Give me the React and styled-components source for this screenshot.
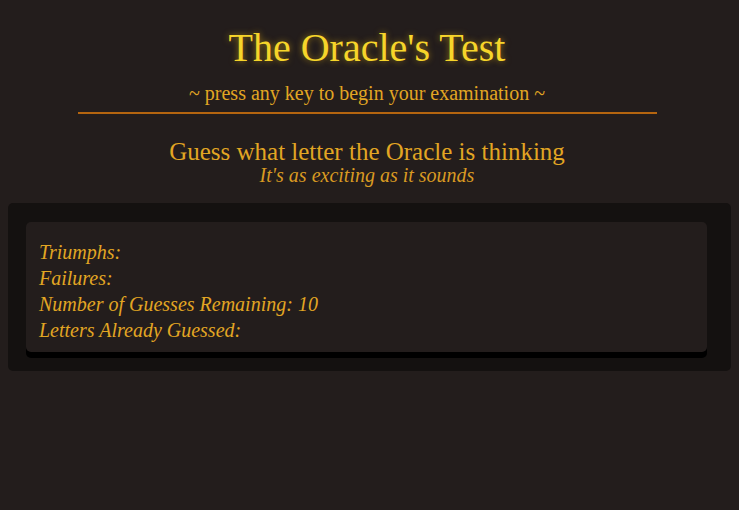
import React from 'react';
import styled, { createGlobalStyle } from 'styled-components';

// styles
const GlobalStyle = createGlobalStyle`
  body {
    margin: 8px;
    background: #231d1c;
    font-family: "Liberation Serif", "Times New Roman", serif;
  }
`;

const Page = styled.div`
  display: flex;
  flex-direction: column;
  align-items: center;
`;

const Header = styled.header`
  display: flex;
  flex-direction: column;
  align-items: center;
  width: 100%;
  padding-right: 5px;
  box-sizing: border-box;
`;

const Title = styled.h1`
  margin: 17px 0 0;
  font-size: 40px;
  font-weight: normal;
  line-height: 46px;
  color: #f6d52a;
  text-shadow: 0 0 6px rgba(230, 180, 20, 0.6);
`;

const Prompt = styled.div`
  margin-top: 11px;
  font-size: 20px;
  line-height: 22px;
  color: #e2a623;
`;

const Rule = styled.hr`
  width: 579px;
  margin: 8px 0 0;
  border: none;
  border-top: 2px solid #b5650f;
`;

const Heading = styled.h2`
  margin: 24px 0 0;
  font-size: 25px;
  font-weight: normal;
  line-height: 28px;
  color: #e2a623;
`;

const Tagline = styled.div`
  font-size: 20px;
  font-style: italic;
  line-height: 19px;
  color: #d99a22;
`;

const Board = styled.section`
  align-self: stretch;
  margin-top: 18px;
  padding: 19px 24px 19px 18px;
  background: #141110;
  border-radius: 5px;
`;

const Card = styled.div`
  padding: 17px 13px 9px;
  background: #231d1c;
  border-radius: 5px;
  box-shadow: 0 6px 0 #000;
`;

const Stat = styled.div`
  font-size: 20px;
  font-style: italic;
  line-height: 26px;
  color: #e2a623;
`;

// components
const App = () => {
  const stats = [
    ['Triumphs', ''],
    ['Failures', ''],
    ['Number of Guesses Remaining', 10],
    ['Letters Already Guessed', ''],
  ];

  return (
    <Page>
      <GlobalStyle />
      <Header>
        <Title>The Oracle's Test</Title>
        <Prompt>~ press any key to begin your examination ~</Prompt>
        <Rule />
        <Heading>Guess what letter the Oracle is thinking</Heading>
        <Tagline>It's as exciting as it sounds</Tagline>
      </Header>
      <Board>
        <Card>
          {stats.map(([label, value]) => (
            <Stat key={label}>{label}: {value}</Stat>
          ))}
        </Card>
      </Board>
    </Page>
  );
};

export default App;
